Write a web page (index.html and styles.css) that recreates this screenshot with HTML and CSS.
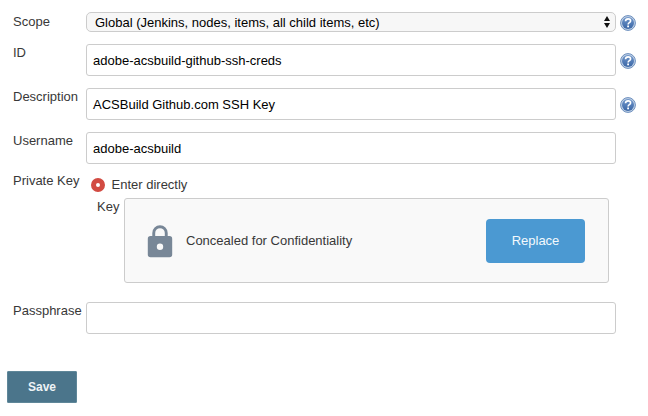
FILE: index.html
```html
<!DOCTYPE html>
<html lang="en">
<head>
<meta charset="utf-8">
<title>Credentials</title>
<link rel="stylesheet" href="styles.css">
</head>
<body>
<svg width="0" height="0" class="defs" aria-hidden="true">
  <defs>
    <linearGradient id="blue" x1="0" y1="0" x2="0" y2="1"><stop offset="0" stop-color="#7197cb"/><stop offset="1" stop-color="#3a66a6"/></linearGradient>
    <symbol id="help" viewBox="0 0 16 16">
      <circle cx="8" cy="8" r="7.4" fill="#c3d3e6" stroke="#6a8dbd" stroke-width="1"/>
      <circle cx="8" cy="8" r="6" fill="url(#blue)"/>
      <path d="M5.500 6.300C5.600 4.700 6.700 3.900 8.100 3.900c1.500 0 2.500.8 2.500 2 0 1.800-2.500 1.700-2.500 3.500" fill="none" stroke="#fff" stroke-width="1.600"/>
      <rect x="7.200" y="10.500" width="1.800" height="1.800" fill="#fff"/>
    </symbol>
  </defs>
</svg>
<form class="form">
  <div class="row scope">
    <label class="label">Scope</label>
    <div class="select"><span class="value">Global (Jenkins, nodes, items, all child items, etc)</span>
      <svg width="6" height="12" viewBox="0 0 6 12"><path d="M0 5 3 0l3 5zM0 7h6l-3 5z" fill="#111"/></svg>
    </div>
    <svg class="help"><use href="#help"/></svg>
  </div>
  <div class="row">
    <label class="label">ID</label>
    <div class="input">adobe-acsbuild-github-ssh-creds</div>
    <svg class="help"><use href="#help"/></svg>
  </div>
  <div class="row">
    <label class="label">Description</label>
    <div class="input">ACSBuild Github.com SSH Key</div>
    <svg class="help"><use href="#help"/></svg>
  </div>
  <div class="row">
    <label class="label">Username</label>
    <div class="input">adobe-acsbuild</div>
  </div>
  <div class="row private">
    <label class="label">Private Key</label>
    <div class="key-block">
      <div class="choice"><span class="radio"></span><span>Enter directly</span></div>
      <div class="key-row">
        <span class="key-label">Key</span>
        <div class="secret">
          <svg class="lock" width="26" height="33" viewBox="0 0 26 33"><path fill="#788797" fill-rule="evenodd" d="M5.300 11V8a7.700 7.700 0 0 1 15.400 0v3h1.800A2.700 2.700 0 0 1 25.200 13.700V29.500A2.700 2.700 0 0 1 22.500 32.200H3.500A2.700 2.700 0 0 1 .8 29.500V13.700A2.700 2.700 0 0 1 3.500 11zM8.200 11h9.600V8A4.800 4.800 0 0 0 8.200 8zM13 18.500a3.200 3.200 0 1 0 0 6.400 3.200 3.200 0 0 0 0-6.400z"/></svg>
          <span class="concealed">Concealed for Confidentiality</span>
          <button type="button" class="replace">Replace</button>
        </div>
      </div>
    </div>
  </div>
  <div class="row">
    <label class="label">Passphrase</label>
    <div class="input"></div>
  </div>
  <button type="button" class="save">Save</button>
</form>
</body>
</html>
```
FILE: styles.css
```css
* { box-sizing: border-box; }
body {
  margin: 0;
  background: #fff;
  color: #383838;
  font: 13px/16px "Liberation Sans", Arial, sans-serif;
}
.defs { display: block; }
.form { padding: 12px 12px 0 13px; }
.row {
  display: grid;
  grid-template-columns: 73px 530px 20px;
  align-items: center;
  margin-bottom: 12px;
}
.label { align-self: start; padding-top: 1px; white-space: nowrap; }
.scope .label { padding-top: 2px; }
.help { width: 16px; height: 16px; margin: 2px 0 0 4px; overflow: visible; }
.select {
  display: flex;
  align-items: center;
  justify-content: space-between;
  height: 20px;
  padding: 0 5px 0 8px;
  border: 1px solid #ccc;
  border-radius: 5px;
  background: #f7f7f7;
  color: #000;
}
.value { padding-top: 1px; }
.input {
  display: flex;
  align-items: center;
  height: 32px;
  padding: 1px 6px 0;
  border: 1px solid #ccc;
  border-radius: 3px;
  background: #fff;
  color: #000;
}
.private { margin-bottom: 19px; }
.private .label { padding-top: 0; margin-top: -3px; }
.key-block { display: flex; flex-direction: column; }
.choice { display: flex; align-items: center; gap: 6.5px; height: 22px; padding: 0 0 4px 5px; }
.radio {
  width: 14px;
  height: 14px;
  border: 5px solid #d24b42;
  border-radius: 50%;
  background: #fff;
}
.key-row { display: flex; align-items: flex-start; padding-left: 11px; }
.key-label { width: 27px; padding-top: 1px; }
.secret {
  display: flex;
  align-items: center;
  width: 485px;
  height: 85px;
  padding: 0 23px 0 22px;
  border: 1px solid #ccc;
  border-radius: 3px;
  background: #f9f9f9;
}
.lock { margin-top: 1px; }
.concealed { margin-left: 13px; }
.replace, .save {
  border: 0;
  padding: 0;
  font: inherit;
  color: #f4f9fd;
}
.replace { width: 99px; height: 44px; margin-left: auto; border-radius: 4px; background: #4b99d2; }
.save {
  display: block;
  width: 70px;
  height: 32px;
  margin: 37px 0 0 -6px;
  border: 1px solid #5f8799;
  border-radius: 1px;
  background: #4b758b;
  color: #eef3f6;
  font-size: 12px;
  font-weight: bold;
}
```
